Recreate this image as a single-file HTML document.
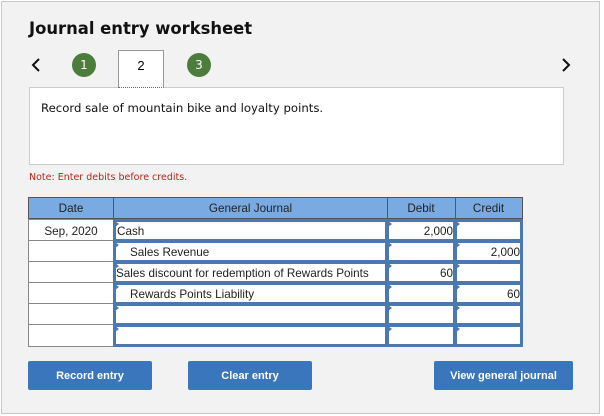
<!DOCTYPE html>
<html><head><style>
body{margin:0;width:604px;height:416px;background:#fff;font-family:"Liberation Sans",Arial,sans-serif;position:relative;overflow:hidden}
.a{position:absolute}
.frame{left:1px;top:1px;width:597px;height:411px;background:#f2f2f2;border:1px solid #c8c8c8}
.c{position:absolute;box-sizing:border-box;font-size:11.7px;color:#222;line-height:19px;white-space:nowrap}
.in{background:#fff;border:3px solid #4a78b0;border-left-width:3px}
.in:before{content:"";position:absolute;left:-1px;top:-1px;border-left:4px solid #4a78b0;border-top:3px solid transparent;border-bottom:3px solid transparent}
.btn{position:absolute;background:#3a76bb;color:#fff;font-size:11px;font-weight:bold;text-align:center;line-height:31px;height:29px;border-radius:2px}
.circ{position:absolute;width:24px;height:24px;border-radius:50%;background:#4c7d3c;color:#fff;font-size:12px;text-align:center;line-height:24px;font-family:"DejaVu Sans",sans-serif}
.v{font-family:"DejaVu Sans",Verdana,sans-serif}
</style></head><body>
<div class="a frame"></div>
<div class="a v" style="left:29px;top:19px;font-size:16.4px;font-weight:bold;color:#111">Journal entry worksheet</div>
<svg class="a" style="left:30px;top:57px" width="12" height="16"><path d="M9 2 L3 8 L9 14" stroke="#111" stroke-width="2" fill="none"/></svg>
<svg class="a" style="left:560px;top:57px" width="12" height="16"><path d="M3 2 L9 8 L3 14" stroke="#111" stroke-width="2" fill="none"/></svg>
<div class="circ" style="left:72px;top:53px">1</div>
<div class="circ" style="left:187px;top:53px">3</div>
<div class="a" style="left:118px;top:50px;width:46px;height:38px;background:#fff;border:1px solid #999;border-bottom:1px dotted #3a6fd0;box-sizing:border-box;text-align:center;font-size:13px;line-height:30px;z-index:2">2</div>
<div class="a" style="left:29px;top:87px;width:535px;height:78px;background:#fff;border:1px solid #ccc;box-sizing:border-box"></div>
<div class="a v" style="left:41px;top:101px;font-size:11.7px;color:#111">Record sale of mountain bike and loyalty points.</div>
<div class="a v" style="left:29px;top:172px;font-size:9.5px;color:#c0211b">Note: Enter debits before credits.</div>

<div class="a" style="left:28px;top:197px;width:495px;height:150px;background:#fff;border:1px solid #777;box-sizing:border-box"></div>
<div class="c" style="left:28px;top:197px;width:495px;height:22px;background:#79aae2;border:1px solid #555"></div>
<div class="c" style="left:28px;top:199px;width:86px;text-align:center">Date</div>
<div class="c" style="left:114px;top:199px;width:273px;text-align:center">General Journal</div>
<div class="c" style="left:387px;top:199px;width:68px;text-align:center">Debit</div>
<div class="c" style="left:455px;top:199px;width:67px;text-align:center">Credit</div>
<div class="a" style="left:113px;top:197px;width:1px;height:22px;background:#555"></div>
<div class="a" style="left:387px;top:197px;width:1px;height:22px;background:#555"></div>
<div class="a" style="left:455px;top:197px;width:1px;height:22px;background:#555"></div>

<div class="c" style="left:28px;top:219px;width:86px;height:22px;border:1px solid #888;text-align:center;line-height:23px">Sep, 2020</div>
<div class="c" style="left:28px;top:240px;width:86px;height:22px;border:1px solid #888"></div>
<div class="c" style="left:28px;top:261px;width:86px;height:22px;border:1px solid #888"></div>
<div class="c" style="left:28px;top:282px;width:86px;height:22px;border:1px solid #888"></div>
<div class="c" style="left:28px;top:303px;width:86px;height:22px;border:1px solid #888"></div>
<div class="c" style="left:28px;top:324px;width:86px;height:23px;border:1px solid #888"></div>

<div class="c in" style="left:113px;top:219px;width:275px;height:23px;padding-left:1px">Cash</div>
<div class="c in" style="left:113px;top:240px;width:275px;height:23px;padding-left:14px">Sales Revenue</div>
<div class="c in" style="left:113px;top:261px;width:275px;height:23px;padding-left:0px">Sales discount for redemption of Rewards Points</div>
<div class="c in" style="left:113px;top:282px;width:275px;height:23px;padding-left:14px">Rewards Points Liability</div>
<div class="c in" style="left:113px;top:303px;width:275px;height:23px"></div>
<div class="c in" style="left:113px;top:324px;width:275px;height:23px"></div>

<div class="c in" style="left:386px;top:219px;width:70px;height:23px;text-align:right;padding-right:0">2,000</div>
<div class="c in" style="left:386px;top:240px;width:70px;height:23px"></div>
<div class="c in" style="left:386px;top:261px;width:70px;height:23px;text-align:right">60</div>
<div class="c in" style="left:386px;top:282px;width:70px;height:23px"></div>
<div class="c in" style="left:386px;top:303px;width:70px;height:23px"></div>
<div class="c in" style="left:386px;top:324px;width:70px;height:23px"></div>

<div class="c in" style="left:454px;top:219px;width:69px;height:23px"></div>
<div class="c in" style="left:454px;top:240px;width:69px;height:23px;text-align:right">2,000</div>
<div class="c in" style="left:454px;top:261px;width:69px;height:23px"></div>
<div class="c in" style="left:454px;top:282px;width:69px;height:23px;text-align:right">60</div>
<div class="c in" style="left:454px;top:303px;width:69px;height:23px"></div>
<div class="c in" style="left:454px;top:324px;width:69px;height:23px"></div>

<div class="btn" style="left:28px;top:361px;width:124px">Record entry</div>
<div class="btn" style="left:188px;top:361px;width:124px">Clear entry</div>
<div class="btn" style="left:434px;top:361px;width:139px">View general journal</div>
</body></html>
